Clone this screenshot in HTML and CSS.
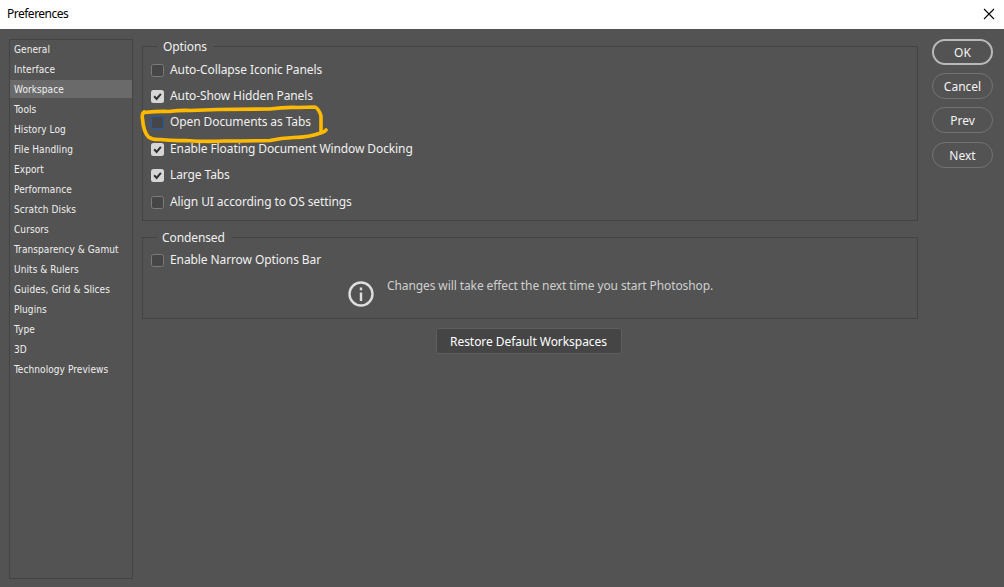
FILE: index.html
```html
<!DOCTYPE html>
<html lang="en">
<head>
<meta charset="utf-8">
<title>Preferences</title>
<link rel="stylesheet" href="styles.css">
</head>
<body>
<header class="titlebar">
  <span class="title">Preferences</span>
  <svg class="close" width="12" height="12" viewBox="0 0 12 12"><path d="M1 1l10 10M11 1L1 11"/></svg>
</header>
<main class="dialog">
  <nav class="sidebar">
    <div class="item">General</div>
    <div class="item">Interface</div>
    <div class="item selected">Workspace</div>
    <div class="item">Tools</div>
    <div class="item">History Log</div>
    <div class="item">File Handling</div>
    <div class="item">Export</div>
    <div class="item">Performance</div>
    <div class="item">Scratch Disks</div>
    <div class="item">Cursors</div>
    <div class="item">Transparency &amp; Gamut</div>
    <div class="item">Units &amp; Rulers</div>
    <div class="item">Guides, Grid &amp; Slices</div>
    <div class="item">Plugins</div>
    <div class="item">Type</div>
    <div class="item">3D</div>
    <div class="item">Technology Previews</div>
  </nav>
  <div class="content">
    <section class="group options">
      <h2 class="legend">Options</h2>
      <div class="check"><span class="box"></span><span>Auto-Collapse Iconic Panels</span></div>
      <div class="check"><span class="box on"><svg width="13" height="13" viewBox="0 0 13 13"><path d="M3.2 6.3l2.4 2.6 4.3-5"/></svg></span><span>Auto-Show Hidden Panels</span></div>
      <div class="check last-close"><span class="box focus"></span><span>Open Documents as Tabs</span></div>
      <div class="check"><span class="box on"><svg width="13" height="13" viewBox="0 0 13 13"><path d="M3.2 6.3l2.4 2.6 4.3-5"/></svg></span><span>Enable Floating Document Window Docking</span></div>
      <div class="check last-close"><span class="box on"><svg width="13" height="13" viewBox="0 0 13 13"><path d="M3.2 6.3l2.4 2.6 4.3-5"/></svg></span><span>Large Tabs</span></div>
      <div class="check"><span class="box"></span><span>Align UI according to OS settings</span></div>
      <svg class="marker" width="192" height="42" viewBox="138 102 192 42"><path d="M144 112.500Q159 111 169 111.500Q180 110 191 110.500L218 109.500L270 109Q284 107 298 107.500L315 107Q319 109 321 116L321 131"/><path d="M144 112Q141.500 114 142.500 119Q143.500 132 148.500 137Q153 140 160 139.500Q173 141 185 140.500Q205 142 225 141Q248 141 270 140.500Q281 138 294 137.500Q310 137 319 133.500Q324 132.500 326 130"/></svg>
    </section>
    <section class="group condensed">
      <h2 class="legend">Condensed</h2>
      <div class="check"><span class="box"></span><span>Enable Narrow Options Bar</span></div>
      <div class="notice">
        <svg width="26" height="26" viewBox="0 0 26 26"><circle cx="13" cy="13" r="11.500"/><path d="M13 11.500v8.500M13 6.500v2.800"/></svg>
        <span>Changes will take effect the next time you start Photoshop.</span>
      </div>
    </section>
    <button class="restore">Restore Default Workspaces</button>
  </div>
  <div class="actions">
    <button class="pill primary">OK</button>
    <button class="pill">Cancel</button>
    <button class="pill">Prev</button>
    <button class="pill next">Next</button>
  </div>
</main>
</body>
</html>
```
FILE: styles.css
```css
* { box-sizing: border-box; }
body {
  margin: 0;
  height: 587px;
  display: flex;
  flex-direction: column;
  overflow: hidden;
  background: #535353;
  color: #f0f0f0;
  font: 12px/16px "Noto Sans", sans-serif;
  white-space: nowrap;
}
.titlebar {
  height: 29px;
  display: flex;
  align-items: center;
  justify-content: space-between;
  padding: 0 9px 2px 7px;
  background: #fff;
  color: #000;
}
.title { letter-spacing: -0.5px; }
.close { stroke: #000; stroke-width: 1.1; }
.dialog {
  flex: 1;
  display: flex;
  padding: 10px 11px 8px 9px;
  letter-spacing: -0.1px;
}
.sidebar {
  width: 124px;
  border: 1px solid #434343;
  font: 10px/20px "DejaVu Sans Condensed", "DejaVu Sans", sans-serif;
  letter-spacing: 0.08px;
}
.item { height: 18px; margin-bottom: 2px; padding-left: 4px; }
.selected { background: #6a6a6a; }
.content {
  width: 776px;
  margin-left: 9px;
  padding-top: 7px;
  display: flex;
  flex-direction: column;
}
.group { position: relative; border: 1px solid #434343; padding-left: 8px; }
.options { height: 175px; }
.condensed { height: 82px; margin-top: 16px; }
.legend {
  width: fit-content;
  height: 16px;
  margin: -8px 0 7px 6px;
  padding: 0 6px;
  background: #535353;
  font: inherit;
}
.condensed .legend { padding-left: 5px; margin-bottom: 6px; }
.check { display: flex; align-items: center; gap: 6px; height: 16px; margin-bottom: 10px; }
.last-close { margin-bottom: 11px; }
.box {
  width: 13px;
  height: 13px;
  border: 1px solid #7b7b7b;
  border-radius: 2.5px;
  background: #464646;
}
.on { background: #d6d6d6; border: 0; }
.on svg { display: block; fill: none; stroke: #303030; stroke-width: 2; }
.focus { border-color: #1a5cb8; }
.marker {
  position: absolute;
  left: -5px;
  top: 55px;
  fill: none;
  stroke: #ffba00;
  stroke-width: 3.6;
  stroke-linecap: round;
  stroke-linejoin: round;
}
.notice { display: flex; gap: 13px; padding-left: 197px; color: #cfcfcf; }
.notice svg { margin-top: 3px; fill: none; stroke: #dedede; stroke-width: 2.4; }
.restore {
  align-self: center;
  width: 186px;
  height: 26px;
  margin: 9px 3px 0 0;
  padding: 2px 0 0;
  border: 1px solid #5e5e5e;
  border-radius: 3px;
  background: #454545;
  color: #fff;
  font: inherit;
  letter-spacing: -0.05px;
}
.actions { margin-left: 14px; display: flex; flex-direction: column; gap: 8px; }
.pill {
  width: 61px;
  height: 26px;
  padding: 2px 0 0;
  border: 1.5px solid #737373;
  border-radius: 13px;
  background: none;
  color: #f4f4f4;
  font: inherit;
}
.primary { border: 2px solid #b9b9b9; }
.next { margin-top: 1px; }
```
